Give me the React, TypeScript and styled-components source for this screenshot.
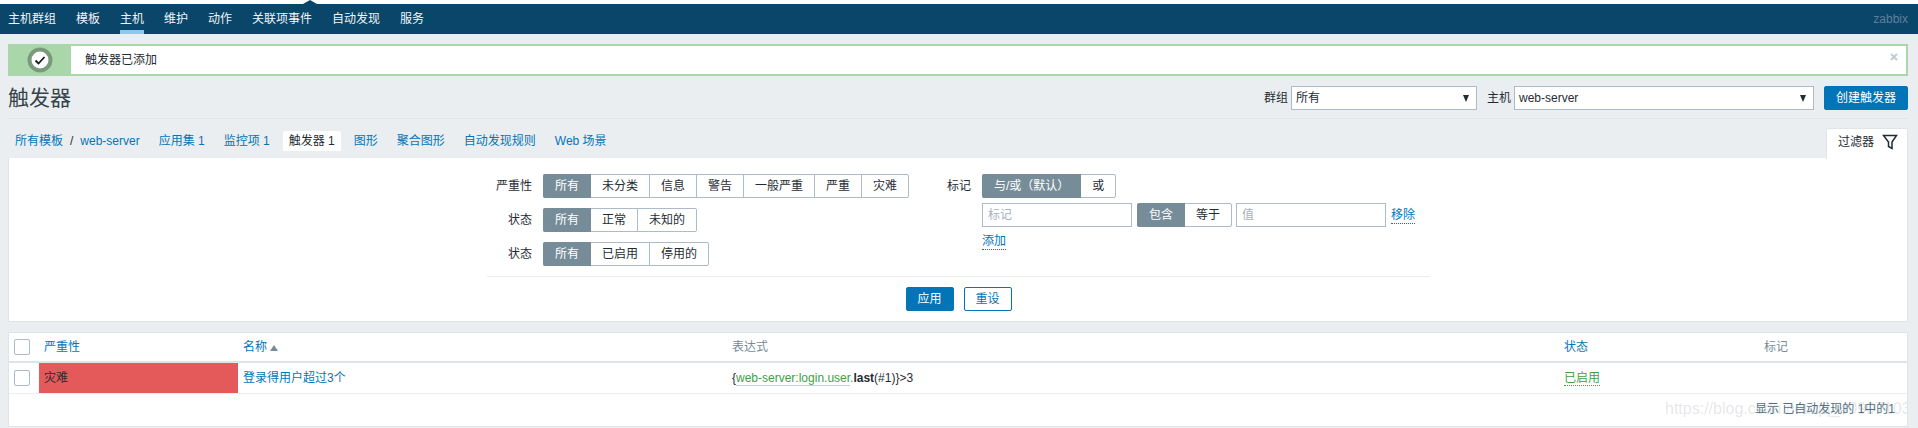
import React from 'react';
import styled, { createGlobalStyle, css } from 'styled-components';

const Global = createGlobalStyle`
  html, body {
    margin: 0;
    padding: 0;
    background: #ebeef0;
    color: #1f2c33;
    font: 12px/16px "Liberation Sans", "Noto Sans CJK SC", sans-serif;
  }
  * { box-sizing: border-box; }
`;

const LINK = '#0275b8';
const LINE = '#dfe4e7';
const CONTROL = '#acbbc7';
const ACTIVE = '#768d99';
const GREEN = '#429e47';

const Page = styled.div`
  width: 1918px;
  height: 428px;
  overflow: hidden;
`;

const TopStrip = styled.div`
  position: relative;
  height: 4px;
  background: #fff;
  &::after {
    content: '';
    position: absolute;
    left: 303px;
    top: 0;
    border-left: 7px solid transparent;
    border-right: 7px solid transparent;
    border-bottom: 4px solid #0a466a;
  }
`;

const Nav = styled.nav`
  display: flex;
  height: 30px;
  padding: 0 10px 0 8px;
  gap: 20px;
  background: #0a466a;
`;

const NavItem = styled.a<{ $active?: boolean }>`
  height: 30px;
  padding-top: 7px;
  color: #f2f5f7;
  ${(p) =>
    p.$active &&
    css`
      border-bottom: 4px solid #8cc9f0;
    `}
`;

const Brand = styled.span`
  margin-left: auto;
  padding-top: 7px;
  color: #5d8199;
`;

const Message = styled.div`
  display: flex;
  height: 32px;
  margin: 10px 10px 0 8px;
  background: #fff;
  border: 2px solid #a9d7a9;
`;

const MessageIcon = styled.div`
  display: flex;
  align-items: center;
  justify-content: center;
  width: 61px;
  padding-right: 1px;
  background: #a9d7a9;
`;

const MessageText = styled.div`
  flex: 1;
  padding: 6px 0 0 14px;
`;

const Close = styled.svg`
  margin: 7px 8px 0 0;
`;

const Header = styled.header`
  display: flex;
  align-items: flex-start;
  height: 43px;
  margin: 0 10px 0 8px;
  padding-top: 10px;
  border-bottom: 1px solid ${LINE};
`;

const Title = styled.h1`
  flex: 1;
  margin: 0;
  font-size: 21px;
  font-weight: 400;
  line-height: 24px;
  color: #36434a;
`;

const SelectLabel = styled.label`
  margin: 4px 3px 0 10px;
`;

const Select = styled.div<{ $width: number }>`
  display: flex;
  align-items: center;
  justify-content: space-between;
  width: ${(p) => p.$width}px;
  height: 24px;
  padding: 0 7px 0 4px;
  background: #fff;
  border: 1px solid ${CONTROL};
`;

const Arrow = styled.i`
  border-left: 3px solid transparent;
  border-right: 3px solid transparent;
  border-top: 7px solid #1f2c33;
`;

const Button = styled.button<{ $outline?: boolean }>`
  height: 24px;
  padding: 0 10px;
  font: inherit;
  color: ${(p) => (p.$outline ? LINK : '#fff')};
  background: ${(p) => (p.$outline ? '#fff' : LINK)};
  border: 1px solid ${LINK};
  border-radius: 2px;
`;

const CreateButton = styled(Button)`
  width: 84px;
  margin-left: 10px;
  padding: 0;
`;

const TabsRow = styled.div`
  display: flex;
  align-items: flex-start;
  justify-content: space-between;
  height: 39px;
  margin: 0 10px 0 8px;
  padding: 12px 0 0 1px;
`;

const Crumbs = styled.div`
  display: flex;
  gap: 7px;
`;

const Crumb = styled.a<{ $active?: boolean }>`
  padding: 2px 6px;
  height: 20px;
  color: ${LINK};
  ${(p) =>
    p.$active &&
    css`
      background: #fff;
      color: #1f2c33;
      border-radius: 2px 2px 0 0;
    `}
`;

const CrumbSlash = styled.span`
  margin: 0 7px;
  color: #1f2c33;
`;

const FilterTab = styled.div`
  display: flex;
  gap: 8px;
  width: 82px;
  height: 31px;
  margin: -3px 0 0;
  padding: 5px 0 0 11px;
  background: #fff;
  border: 1px solid ${LINE};
  border-bottom: 0;
  border-radius: 2px 2px 0 0;
`;

const FilterPanel = styled.section`
  height: 164px;
  margin: 0 10px 0 8px;
  padding-top: 16px;
  background: #fff;
  border: 1px solid ${LINE};
  border-top: 0;
`;

const Form = styled.div`
  width: 943px;
  margin-left: 478px;
`;

const Columns = styled.div`
  display: flex;
  height: 92px;
`;

const Column = styled.div<{ $width?: number; $gap: number }>`
  display: flex;
  flex-direction: column;
  gap: ${(p) => p.$gap}px;
  width: ${(p) => (p.$width ? `${p.$width}px` : 'auto')};
`;

const Row = styled.div<{ $label: number }>`
  display: grid;
  grid-template-columns: ${(p) => p.$label}px 1fr;
  column-gap: 11px;
  align-items: center;
`;

const RowLabel = styled.span`
  text-align: right;
`;

const Seg = styled.div`
  display: inline-flex;
  height: 24px;
  background: #fff;
  border: 1px solid ${CONTROL};
  border-radius: 2px;
`;

const SegItem = styled.span<{ $on?: boolean }>`
  display: flex;
  align-items: center;
  padding: 0 11px;
  border-right: 1px solid ${CONTROL};
  &:last-child {
    border-right: 0;
  }
  ${(p) =>
    p.$on &&
    css`
      margin: -1px 0 -1px -1px;
      padding: 0 12px;
      color: #fff;
      background: ${ACTIVE};
      border-right: 0;
      border-radius: 2px 0 0 2px;
    `}
`;

const TagLine = styled.div`
  display: flex;
  align-items: center;
  gap: 5px;
`;

const TagInput = styled.input`
  width: 150px;
  height: 24px;
  padding: 0 5px;
  font: inherit;
  background: #fff;
  border: 1px solid ${CONTROL};
  border-radius: 0;
  ${Seg} + & {
    margin-left: -1px;
  }
  &::placeholder {
    color: #a5b3bd;
    opacity: 1;
  }
`;

const DotLink = styled.a<{ $green?: boolean }>`
  color: ${(p) => (p.$green ? GREEN : LINK)};
  border-bottom: 1px dotted ${(p) => (p.$green ? GREEN : LINK)};
`;

const AddLine = styled.div`
  display: flex;
  margin-top: 1px;
`;

const Actions = styled.div`
  display: flex;
  justify-content: center;
  gap: 10px;
  padding-top: 10px;
  border-top: 1px solid #ebeef0;
  margin-top: 10px;
`;

const ActionButton = styled(Button)`
  width: 48px;
  padding: 0;
`;

const Table = styled.section`
  position: relative;
  height: 95px;
  margin: 10px 10px 0 8px;
  background: #fff;
  border: 1px solid ${LINE};
`;

const cols = '30px 199px 489px 832px 200px 1fr';

const HeadRow = styled.div`
  display: grid;
  grid-template-columns: ${cols};
  align-items: center;
  height: 30px;
  border-bottom: 2px solid ${LINE};
`;

const BodyRow = styled.div`
  display: grid;
  grid-template-columns: ${cols};
  align-items: center;
  height: 31px;
  border-bottom: 1px solid #ebeef0;
`;

const Cell = styled.div<{ $muted?: boolean; $link?: boolean }>`
  padding-left: 5px;
  color: ${(p) => (p.$muted ? ACTIVE : p.$link ? LINK : '#1f2c33')};
`;

const CheckCell = styled.div`
  display: flex;
  padding-left: 5px;
`;

const Check = styled.span`
  width: 16px;
  height: 16px;
  background: #fff;
  border: 1px solid ${CONTROL};
  border-radius: 2px;
`;

const Severity = styled(Cell)`
  height: 30px;
  padding-top: 7px;
  background: #e45959;
`;

const SortUp = styled.i`
  display: inline-block;
  margin-left: 3px;
  border-left: 4px solid transparent;
  border-right: 4px solid transparent;
  border-bottom: 6px solid ${ACTIVE};
`;

const ItemKey = styled.span`
  color: ${GREEN};
  border-bottom: 1px solid #c5ced5;
`;

const Dot = styled.span`
  color: ${GREEN};
`;

const Fn = styled.b`
  font-weight: 700;
`;

const Footer = styled.div`
  padding: 7px 12px 0 0;
  text-align: right;
  color: #4f6f7e;
`;

const Watermark = styled.div`
  position: absolute;
  right: 0;
  bottom: 7px;
  width: 242px;
  overflow: hidden;
  white-space: nowrap;
  font-size: 16px;
  line-height: 20px;
  color: rgba(120, 130, 140, 0.2);
`;

const severities = ['未分类', '信息', '警告', '一般严重', '严重', '灾难'];

const App = () => (
  <Page>
    <Global />
    <TopStrip />
    <Nav>
      {['主机群组', '模板', '主机', '维护', '动作', '关联项事件', '自动发现', '服务'].map((n) => (
        <NavItem key={n} $active={n === '主机'}>
          {n}
        </NavItem>
      ))}
      <Brand>zabbix</Brand>
    </Nav>

    <Message>
      <MessageIcon>
        <svg width="26" height="26" viewBox="0 0 26 26">
          <circle cx="13" cy="13" r="10.5" fill="#fff" stroke="#7a9a7c" strokeWidth="4" />
          <path d="M8.5 13.5l3 3 6-6.5" fill="none" stroke="#1a1a1a" strokeWidth="1.8" />
        </svg>
      </MessageIcon>
      <MessageText>触发器已添加</MessageText>
      <Close width="8" height="8" viewBox="0 0 8 8">
        <path d="M1 1l6 6M7 1l-6 6" stroke="#c3ccd3" strokeWidth="2" />
      </Close>
    </Message>

    <Header>
      <Title>触发器</Title>
      <SelectLabel>群组</SelectLabel>
      <Select $width={186}>
        <span>所有</span>
        <Arrow />
      </Select>
      <SelectLabel>主机</SelectLabel>
      <Select $width={300}>
        <span>web-server</span>
        <Arrow />
      </Select>
      <CreateButton>创建触发器</CreateButton>
    </Header>

    <TabsRow>
      <Crumbs>
        <Crumb>
          所有模板<CrumbSlash>/</CrumbSlash>web-server
        </Crumb>
        <Crumb>应用集 1</Crumb>
        <Crumb>监控项 1</Crumb>
        <Crumb $active>触发器 1</Crumb>
        <Crumb>图形</Crumb>
        <Crumb>聚合图形</Crumb>
        <Crumb>自动发现规则</Crumb>
        <Crumb>Web 场景</Crumb>
      </Crumbs>
      <FilterTab>
        过滤器
        <svg width="16" height="16" viewBox="0 0 16 16">
          <path d="M1.5 1.5h13L10 8v6.5L6.5 12.5V8z" fill="none" stroke="#1f2c33" strokeWidth="1.5" />
        </svg>
      </FilterTab>
    </TabsRow>

    <FilterPanel>
      <Form>
        <Columns>
          <Column $width={435} $gap={10}>
            <Row $label={45}>
              <RowLabel>严重性</RowLabel>
              <div>
                <Seg>
                  <SegItem $on>所有</SegItem>
                  {severities.map((s) => (
                    <SegItem key={s}>{s}</SegItem>
                  ))}
                </Seg>
              </div>
            </Row>
            <Row $label={45}>
              <RowLabel>状态</RowLabel>
              <div>
                <Seg>
                  <SegItem $on>所有</SegItem>
                  <SegItem>正常</SegItem>
                  <SegItem>未知的</SegItem>
                </Seg>
              </div>
            </Row>
            <Row $label={45}>
              <RowLabel>状态</RowLabel>
              <div>
                <Seg>
                  <SegItem $on>所有</SegItem>
                  <SegItem>已启用</SegItem>
                  <SegItem>停用的</SegItem>
                </Seg>
              </div>
            </Row>
          </Column>
          <Column $gap={5}>
            <Row $label={49}>
              <RowLabel>标记</RowLabel>
              <div>
                <Seg>
                  <SegItem $on>与/或（默认）</SegItem>
                  <SegItem>或</SegItem>
                </Seg>
              </div>
            </Row>
            <Row $label={49}>
              <span />
              <TagLine>
                <TagInput placeholder="标记" readOnly />
                <Seg>
                  <SegItem $on>包含</SegItem>
                  <SegItem>等于</SegItem>
                </Seg>
                <TagInput placeholder="值" readOnly />
                <DotLink>移除</DotLink>
              </TagLine>
            </Row>
            <Row $label={49}>
              <span />
              <AddLine>
                <DotLink>添加</DotLink>
              </AddLine>
            </Row>
          </Column>
        </Columns>
        <Actions>
          <ActionButton>应用</ActionButton>
          <ActionButton $outline>重设</ActionButton>
        </Actions>
      </Form>
    </FilterPanel>

    <Table>
      <HeadRow>
        <CheckCell>
          <Check />
        </CheckCell>
        <Cell $link>严重性</Cell>
        <Cell $link>
          名称
          <SortUp />
        </Cell>
        <Cell $muted>表达式</Cell>
        <Cell $link>状态</Cell>
        <Cell $muted>标记</Cell>
      </HeadRow>
      <BodyRow>
        <CheckCell>
          <Check />
        </CheckCell>
        <Severity>灾难</Severity>
        <Cell $link>登录得用户超过3个</Cell>
        <Cell>
          {'{'}
          <ItemKey>web-server:login.user</ItemKey>
          <Dot>.</Dot>
          <Fn>last</Fn>(#1){'}'}&gt;3
        </Cell>
        <Cell>
          <DotLink $green>已启用</DotLink>
        </Cell>
        <Cell />
      </BodyRow>
      <Footer>显示 已自动发现的 1中的1</Footer>
      <Watermark>https://blog.csdn.net/qq_40907103</Watermark>
    </Table>
  </Page>
);

export default App;
